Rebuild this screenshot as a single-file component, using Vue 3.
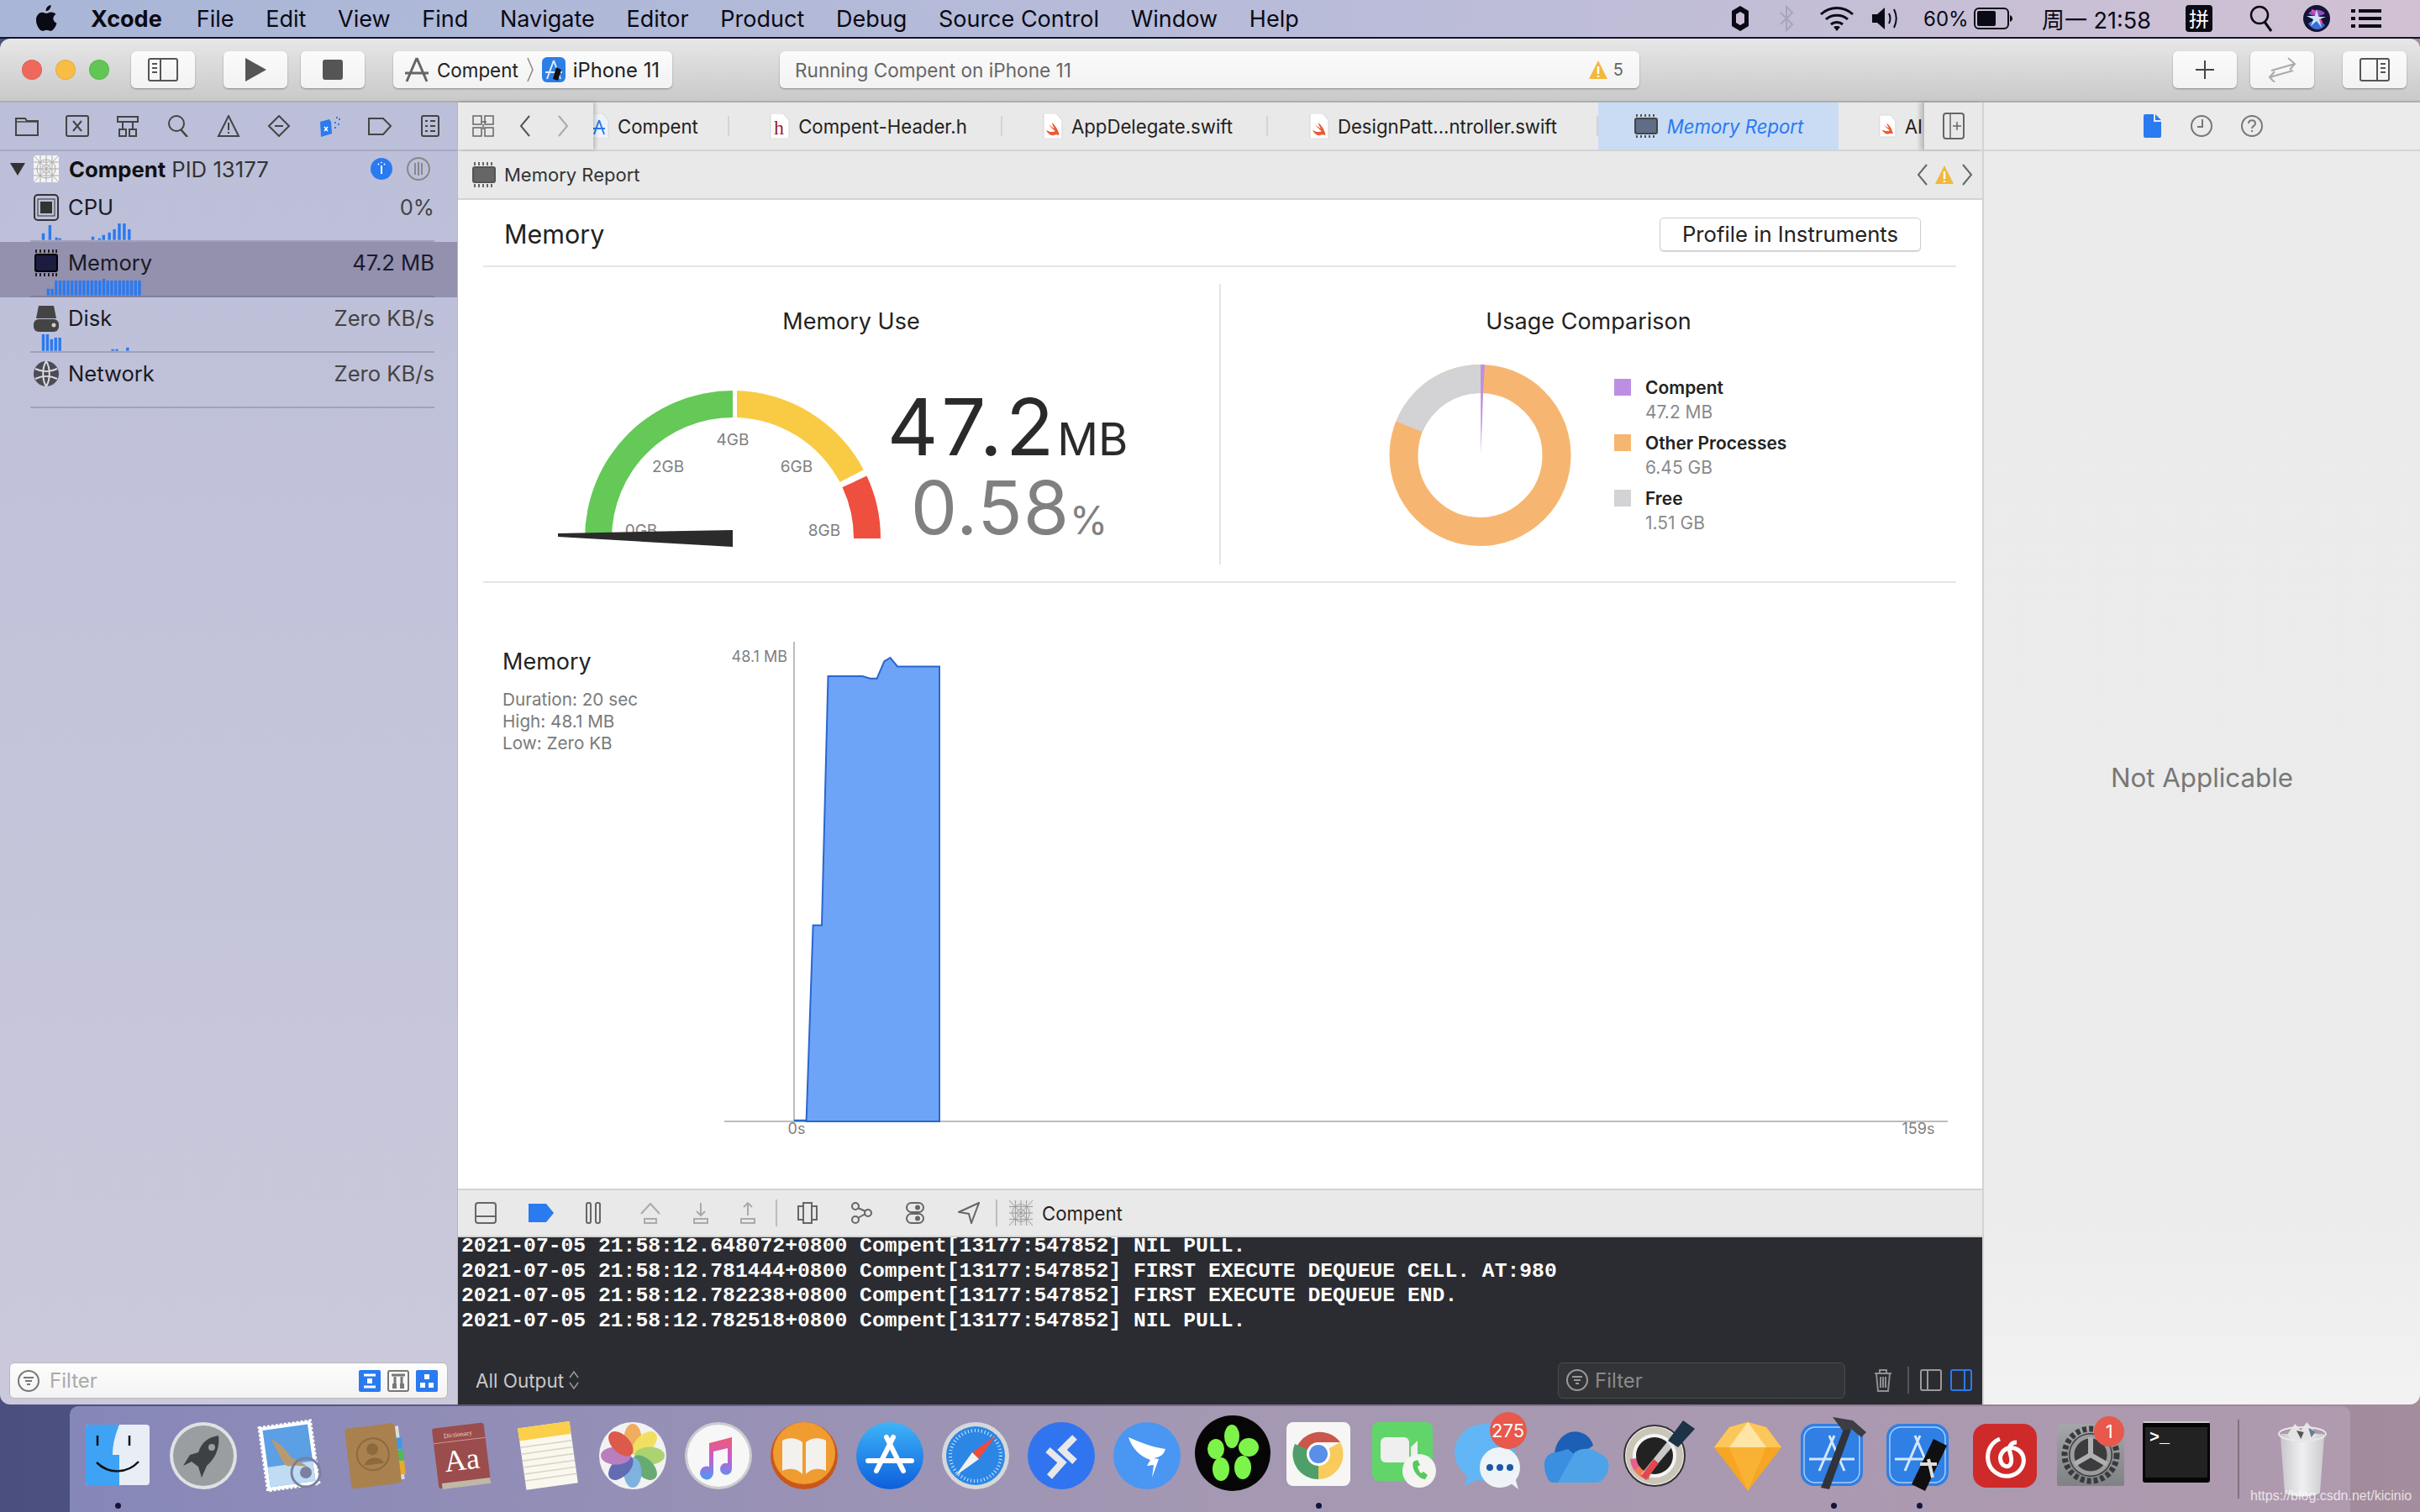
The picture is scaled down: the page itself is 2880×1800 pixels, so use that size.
<template>
  <div class="screen">
    <header class="menubar">
      <svg class="apple" viewBox="0 0 26 32"><path d="M18.6 0c.2 2-.6 3.6-1.6 4.9-1.1 1.300-2.700 2.300-4.400 2.100-.2-1.800.7-3.600 1.700-4.800C15.400 1 17.200.1 18.600 0zM24.500 11c-2.700 1.700-3.100 3.800-3.100 5.100 0 3.400 2.800 5 4.100 5.600-.8 2.500-3.700 9-7.200 9.100-1.700 0-2.500-1.100-4.800-1.100s-3.200 1.100-4.800 1.100C5.500 30.900 1 24.300 1 17.900c0-5.900 3.800-9.200 7.300-9.200 2.100 0 3.700 1.300 5 1.300 1.200 0 3.100-1.400 5.500-1.400 1.100 0 3.800.2 5.700 2.400z" fill="#0a0a14"/></svg>
      <span v-for="m in menus" :key="m" class="menu" :class="{ app: m === 'Xcode' }">{{ m }}</span>
      <div class="status">
        <svg class="st-hex" viewBox="0 0 24 32"><path d="M12 1l10 6v18l-10 6-10-6V7z" fill="#0a0a14"/><path d="M12 8l5 3v10l-5 3-5-3V11z" fill="#cbbfd5"/></svg>
        <svg class="st-bt" viewBox="0 0 18 32"><path d="M2 9l14 14-7 7V2l7 7L2 23" fill="none" stroke="#a9a4ba" stroke-width="2"/></svg>
        <svg class="st-wifi" viewBox="0 0 42 30"><g fill="none" stroke="#0a0a14" stroke-width="3"><path d="M2 10c11-10 27-10 38 0"/><path d="M8 16c7-6.500 19-6.500 26 0"/><path d="M14 22c4-3.500 10-3.500 14 0"/></g><path d="M21 30l-4-5c2-1.500 6-1.500 8 0z" fill="#0a0a14"/></svg>
        <svg class="st-snd" viewBox="0 0 34 30"><path d="M1 10h6l9-8v26l-9-8H1z" fill="#0a0a14"/><g fill="none" stroke="#0a0a14" stroke-width="2"><path d="M21 9c2 4 2 8 0 12"/><path d="M27 4c3.500 7 3.500 15 0 22"/></g></svg>
        <span class="st-pct">60%</span>
        <svg class="st-bat" viewBox="0 0 46 26"><rect x="1" y="1" width="40" height="24" rx="5" fill="none" stroke="#0a0a14" stroke-width="2"/><rect x="4" y="4" width="22" height="18" rx="2" fill="#0a0a14"/><path d="M43 9c2 1 3 2 3 4s-1 3-3 4z" fill="#0a0a14"/></svg>
        <span class="st-time">周一 21:58</span>
        <span class="st-pin">拼</span>
        <svg class="st-search" viewBox="0 0 28 32"><circle cx="12" cy="12" r="10" fill="none" stroke="#0a0a14" stroke-width="2.500"/><path d="M18 20l8 11" stroke="#0a0a14" stroke-width="3"/></svg>
        <svg class="st-siri" viewBox="0 0 32 32"><circle cx="16" cy="16" r="16" fill="#141235"/><path d="M6 22c5-5 15-4 20 2-5 7-15 7-20-2z" fill="#3b6dd6"/><path d="M6 10c5-5 15-6 20 0-5 4-15 4-20 0z" fill="#8a4fc4"/><path d="M10 6c6 3 9 8 12 16" stroke="#e14fa7" stroke-width="3" fill="none"/><path d="M16 5l2 9 9 0-8 3 3 10-6-8-7 6 3-8-8-4 10 0z" fill="#c9e4f7"/></svg>
        <svg class="st-list" viewBox="0 0 36 22"><g fill="#0a0a14"><rect width="5" height="4"/><rect x="9" width="27" height="4"/><rect y="9" width="5" height="4"/><rect x="9" y="9" width="27" height="4"/><rect y="18" width="5" height="4"/><rect x="9" y="18" width="27" height="4"/></g></svg>
      </div>
    </header>

    <div class="window">
      <div class="toolbar">
        <span class="light red"></span><span class="light yellow"></span><span class="light green"></span>
        <button class="tb-btn tb-nav">
          <svg width="36" height="28" viewBox="0 0 36 28"><rect x="1" y="1" width="34" height="26" rx="2" fill="none" stroke="#555" stroke-width="2"/><path d="M15 1v26M5 7h6M5 12h6M5 17h6" stroke="#555" stroke-width="2"/></svg>
        </button>
        <button class="tb-btn tb-play"><svg width="26" height="28" viewBox="0 0 26 28"><path d="M1 0l25 14L1 28z" fill="#555"/></svg></button>
        <button class="tb-btn tb-stop"><span class="stop-square"></span></button>
        <div class="tb-btn scheme">
          <svg width="32" height="30" viewBox="0 0 32 30"><g stroke="#666" stroke-width="3" fill="none"><path d="M16 1L4 29M16 1l12 28M2 19h28"/></g></svg>
          <span class="scheme-name">Compent</span>
          <svg width="8" height="30" viewBox="0 0 8 30"><path d="M1 1l6 14-6 14" fill="none" stroke="#888" stroke-width="1.500"/></svg>
          <svg class="scheme-app" width="28" height="30" viewBox="0 0 28 30"><rect width="28" height="30" rx="6" fill="#2c7fe6"/><path d="M14 4L6 26M14 4l8 22M4 18h20" stroke="#dcecff" stroke-width="2" fill="none"/><path d="M17 12l6 3-4 13-6-2z" fill="#111"/></svg>
          <span class="scheme-device">iPhone 11</span>
        </div>
        <div class="tb-btn activity">
          <span class="activity-text">Running Compent on iPhone 11</span>
          <svg width="24" height="24" viewBox="0 0 24 24"><path d="M12 1l11 22H1z" fill="#f0b93a"/><path d="M12 8v9M12 19v2" stroke="#fff" stroke-width="2.500"/></svg>
          <span class="activity-count">5</span>
        </div>
        <button class="tb-btn tb-add"><svg width="24" height="24" viewBox="0 0 24 24"><path d="M12 1v22M1 12h22" stroke="#444" stroke-width="2"/></svg></button>
        <button class="tb-btn tb-swap"><svg width="38" height="30" viewBox="0 0 38 30"><path d="M6 16L34 8M26 1l8 7-6 7M32 16L4 24M10 17l-6 7 6 6" fill="none" stroke="#aaa" stroke-width="2"/></svg></button>
        <button class="tb-btn tb-insp">
          <svg width="36" height="28" viewBox="0 0 36 28"><rect x="1" y="1" width="34" height="26" rx="2" fill="none" stroke="#555" stroke-width="2"/><path d="M21 1v26M25 7h6M25 12h6M25 17h6" stroke="#555" stroke-width="2"/></svg>
        </button>
      </div>

      <div class="body">
        <aside class="sidebar">
          <div class="nav-tabs">
            <svg class="nav-ic" viewBox="0 0 30 26"><path d="M2 4h11l2 3h13v17H2z" fill="none" stroke="#444" stroke-width="2"/><path d="M2 8h26" stroke="#444" stroke-width="1.500"/></svg>
            <svg class="nav-ic" viewBox="0 0 30 26"><rect x="2" y="1" width="26" height="24" rx="2" fill="none" stroke="#444" stroke-width="2"/><path d="M10 7l10 12M20 7L10 19" stroke="#444" stroke-width="2"/></svg>
            <svg class="nav-ic" viewBox="0 0 30 26"><path d="M3 2h24v6H3zM9 8v8M21 8v8" fill="none" stroke="#444" stroke-width="2"/><rect x="5" y="17" width="8" height="8" fill="none" stroke="#444" stroke-width="2"/><rect x="17" y="17" width="8" height="8" fill="none" stroke="#444" stroke-width="2"/></svg>
            <svg class="nav-ic" viewBox="0 0 30 26"><circle cx="13" cy="10" r="9" fill="none" stroke="#444" stroke-width="2"/><path d="M18 17l8 9" stroke="#444" stroke-width="2.500"/></svg>
            <svg class="nav-ic" viewBox="0 0 30 26"><path d="M15 1l12 24H3z" fill="none" stroke="#444" stroke-width="2"/><path d="M15 9v9M15 20v2" stroke="#444" stroke-width="2"/></svg>
            <svg class="nav-ic" viewBox="0 0 30 26"><path d="M15 1l12 12-12 12L3 13z" fill="none" stroke="#444" stroke-width="2"/><path d="M10 13h10" stroke="#444" stroke-width="2"/></svg>
            <svg class="nav-ic" viewBox="0 0 30 26"><path d="M4 8l11-3 2 3 1 14-13 4z" fill="#2a7af0"/><path d="M9 14l4 5M13 14l-4 5" stroke="#fff" stroke-width="1.500"/><g fill="#2a7af0"><rect x="21" y="8" width="2" height="2"/><rect x="26" y="4" width="2" height="2"/><rect x="23" y="2" width="2" height="2"/><rect x="25" y="10" width="2" height="2"/><rect x="21" y="14" width="2" height="2"/></g></svg>
            <svg class="nav-ic" viewBox="0 0 30 26"><path d="M2 4h17l9 9-9 10H2z" fill="none" stroke="#444" stroke-width="2"/></svg>
            <svg class="nav-ic" viewBox="0 0 30 26"><rect x="5" y="1" width="20" height="24" rx="2" fill="none" stroke="#444" stroke-width="2"/><path d="M9 7h3M15 7h6M9 13h3M15 13h6M9 19h3M15 19h6" stroke="#444" stroke-width="2"/></svg>
          </div>

          <div class="process">
            <span class="disclosure"></span>
            <svg width="30" height="32" viewBox="0 0 30 32"><rect width="30" height="32" fill="#f4f4f6"/><g fill="none" stroke="#aaa"><circle cx="15" cy="16" r="11"/><circle cx="15" cy="16" r="5"/><path d="M0 0l30 32M30 0L0 32M15 0v32M0 16h30M8 0v32M22 0v32M0 8h30M0 24h30"/></g></svg>
            <span class="process-name"><b>Compent</b> PID 13177</span>
            <svg class="proc-info" width="28" height="28" viewBox="0 0 28 28"><circle cx="14" cy="14" r="13" fill="#2a7af0"/><path d="M14 10v10M10 8l1 1M18 8l-1 1M14 6v1" stroke="#fff" stroke-width="2"/></svg>
            <svg class="proc-pause" width="28" height="28" viewBox="0 0 28 28"><circle cx="14" cy="14" r="13" fill="none" stroke="#888" stroke-width="2"/><path d="M10 7v14M14 6v16M18 7v14" stroke="#888" stroke-width="2"/></svg>
          </div>

          <div v-for="g in gauges" :key="g.name" class="gauge-row" :class="{ selected: g.selected }">
            <div class="gauge-inner">
              <div class="gauge-line">
                <svg v-if="g.name === 'CPU'" width="30" height="32" viewBox="0 0 30 32"><rect x="1" y="1" width="28" height="30" rx="4" fill="none" stroke="#333" stroke-width="2"/><rect x="5" y="6" width="20" height="20" fill="none" stroke="#333"/><rect x="8" y="9" width="14" height="14" fill="#333"/></svg>
                <svg v-else-if="g.name === 'Memory'" width="30" height="32" viewBox="0 0 30 32"><rect x="2" y="6" width="26" height="20" rx="2" fill="#1c1c40" stroke="#000" stroke-width="2"/><path d="M3 0v4M8 0v4M13 0v4M18 0v4M23 0v4M27 0v4M3 28v4M8 28v4M13 28v4M18 28v4M23 28v4M27 28v4" stroke="#222" stroke-width="2"/></svg>
                <svg v-else-if="g.name === 'Disk'" width="30" height="32" viewBox="0 0 30 32"><path d="M6 1h18l3 15H3z" fill="#444"/><rect y="17" width="30" height="15" rx="6" fill="#444"/><circle cx="24" cy="24" r="2.500" fill="#ccc"/></svg>
                <svg v-else width="30" height="32" viewBox="0 0 30 32"><circle cx="15" cy="16" r="15" fill="#4c4c58"/><path d="M15 1c-5 8-5 22 0 30M15 1c5 8 5 22 0 30M2 10c8 4 18 4 26 0M2 22c8-4 18-4 26 0" fill="none" stroke="#ddd" stroke-width="2"/></svg>
                <span class="gauge-name">{{ g.name }}</span>
                <span class="gauge-value">{{ g.value }}</span>
              </div>
              <svg class="gauge-bars" width="480" height="20" viewBox="0 0 480 20">
                <rect v-for="(b, i) in g.bars" :key="i" :x="b[0]" :y="20 - b[1]" width="3.500" :height="b[1]" fill="#2a7af0" />
              </svg>
            </div>
          </div>

          <div class="nav-filter">
            <div class="filter-box">
              <svg width="26" height="26" viewBox="0 0 26 26"><circle cx="13" cy="13" r="12" fill="none" stroke="#777" stroke-width="2"/><path d="M7 9h12M9 13h8M11 17h4" stroke="#777" stroke-width="2"/></svg>
              <span class="filter-text">Filter</span>
              <svg class="fb-ic" width="26" height="26" viewBox="0 0 26 26"><rect width="26" height="26" rx="2" fill="#2a7af0"/><path d="M6 6h14M6 20h14" stroke="#fff" stroke-width="3"/><rect x="10" y="10" width="6" height="6" fill="#fff"/></svg>
              <svg class="fb-ic" width="26" height="26" viewBox="0 0 26 26"><rect x="1" y="1" width="24" height="24" rx="2" fill="none" stroke="#777" stroke-width="2"/><path d="M5 6h16M9 8v8M17 8v8" stroke="#777" stroke-width="3"/><rect x="6" y="16" width="5" height="6" fill="#777"/><rect x="15" y="16" width="5" height="6" fill="#777"/></svg>
              <svg class="fb-ic" width="26" height="26" viewBox="0 0 26 26"><rect width="26" height="26" rx="2" fill="#2a7af0"/><rect x="10" y="5" width="6" height="6" fill="#fff"/><rect x="5" y="15" width="6" height="6" fill="#fff"/><rect x="15" y="15" width="6" height="6" fill="#fff"/></svg>
            </div>
          </div>
        </aside>

        <main class="center">
          <div class="tabbar">
            <div class="tab-controls">
              <svg width="26" height="26" viewBox="0 0 26 26"><g fill="none" stroke="#666" stroke-width="1.500"><rect x="1" y="1" width="10" height="10"/><rect x="15" y="1" width="10" height="10"/><rect x="1" y="15" width="10" height="10"/><rect x="15" y="15" width="10" height="10"/><path d="M11 8h6M13 11v6"/></g></svg>
              <svg class="chev-left" width="14" height="26" viewBox="0 0 14 26"><path d="M12 1L2 13l10 12" fill="none" stroke="#555" stroke-width="2"/></svg>
              <svg class="chev-right" width="14" height="26" viewBox="0 0 14 26"><path d="M2 1l10 12L2 25" fill="none" stroke="#aaa" stroke-width="2"/></svg>
            </div>
            <div class="tabs">
              <div v-for="t in tabs" :key="t.name" class="tab" :class="t.cls">
                <svg v-if="t.kind === 'mem'" width="30" height="28" viewBox="0 0 30 28"><rect x="2" y="5" width="26" height="18" rx="2" fill="#5f6d86" stroke="#444" stroke-width="2"/><path d="M4 0v3M9 0v3M14 0v3M19 0v3M24 0v3M4 25v3M9 25v3M14 25v3M19 25v3M24 25v3" stroke="#555" stroke-width="2"/></svg>
                <svg v-else width="24" height="30" viewBox="0 0 24 30">
                  <path d="M1 0h15l7 8v22H1z" :fill="t.kind === 'proj' ? '#eef3fb' : '#fff'" stroke="#d5d5d5" />
                  <text v-if="t.kind === 'h'" x="5" y="25" class="h-glyph">h</text>
                  <path v-else-if="t.kind === 'swift'" d="M4 20c4 2 8 3 11 1-3-2-7-6-8-8 3 3 5 4 7 5-2-3-3-5-3-7 3 3 6 6 7 10 1 2 2 4 1 5-2-1-4-1-6 0-3 1-7-2-9-6z" fill="#ec5a35" />
                  <path v-else d="M12 8l-6 17M12 8l6 17M5 18h14" stroke="#2a7af0" stroke-width="2" fill="none" />
                </svg>
                <span class="tab-name">{{ t.name }}</span>
              </div>
            </div>
            <div class="tab-add">
              <svg width="26" height="32" viewBox="0 0 26 32"><rect x="1" y="1" width="24" height="30" rx="3" fill="none" stroke="#666" stroke-width="2"/><path d="M9 1v30M17 11v10M12 16h10" stroke="#666" stroke-width="1.500"/></svg>
            </div>
          </div>

          <div class="jumpbar">
            <svg width="30" height="30" viewBox="0 0 30 30"><rect x="2" y="6" width="26" height="18" rx="2" fill="#666" stroke="#555" stroke-width="2"/><path d="M4 0v4M9 0v4M14 0v4M19 0v4M24 0v4M4 26v4M9 26v4M14 26v4M19 26v4M24 26v4" stroke="#666" stroke-width="2"/></svg>
            <span class="jump-text">Memory Report</span>
            <svg class="jump-prev" width="14" height="26" viewBox="0 0 14 26"><path d="M12 1L2 13l10 12" fill="none" stroke="#666" stroke-width="2"/></svg>
            <svg class="jump-warn" width="24" height="24" viewBox="0 0 24 24"><path d="M12 1l11 22H1z" fill="#f0b93a"/><path d="M12 8v9M12 19v2" stroke="#fff" stroke-width="2.500"/></svg>
            <svg class="jump-next" width="14" height="26" viewBox="0 0 14 26"><path d="M2 1l10 12L2 25" fill="none" stroke="#666" stroke-width="2"/></svg>
          </div>

          <section class="report">
            <div class="report-head">
              <h2>Memory</h2>
              <button class="profile">Profile in Instruments</button>
            </div>

            <div class="summary">
              <div class="panel">
                <h3>Memory Use</h3>
                <div class="use-body">
                  <svg class="dial" width="410" height="205" viewBox="650 455 410 205">
                    <path d="M696 641A176 176 0 0 1 872 465V497A144 144 0 0 0 728 641Z" fill="#64c957" />
                    <path d="M877 465.100A176 176 0 0 1 1027.800 559.200L999.500 574.100A144 144 0 0 0 877 497.100Z" fill="#f9cb45" />
                    <path d="M1031.500 566.600A176 176 0 0 1 1048 641H1016A144 144 0 0 0 1002.500 580.100Z" fill="#ee4f3e" />
                    <text v-for="l in dialLabels" :key="l.t" :x="l.x" :y="l.y" class="dial-label">{{ l.t }}</text>
                    <polygon points="664,635 664,639 872,651 872,631" fill="#2b2b2b" />
                  </svg>
                  <div class="readout">
                    <div class="read-main">47.2<small>MB</small></div>
                    <div class="read-sub">0.58<small>%</small></div>
                  </div>
                </div>
              </div>
              <div class="panel-rule"></div>
              <div class="panel">
                <h3>Usage Comparison</h3>
                <div class="compare-body">
                  <svg width="220" height="220" viewBox="1650 432 220 220">
                    <circle cx="1760.500" cy="542" r="91" fill="none" stroke="#f6b671" stroke-width="34" />
                    <path d="M1660.400 501.500A108 108 0 0 1 1761 434V468A74 74 0 0 0 1691.900 514.300Z" fill="#d3d3d5" />
                    <polygon points="1761,434 1766,434 1764,468 1761.500,540" fill="#bd8fe2" />
                  </svg>
                  <ul class="legend">
                    <li v-for="l in legend" :key="l.name">
                      <i class="swatch" :class="l.cls"></i>
                      <div><b>{{ l.name }}</b><span>{{ l.value }}</span></div>
                    </li>
                  </ul>
                </div>
              </div>
            </div>

            <div class="graph">
              <div class="graph-info">
                <h4>Memory</h4>
                <p>Duration: 20 sec</p>
                <p>High: 48.1 MB</p>
                <p>Low: Zero KB</p>
              </div>
              <svg class="graph-plot" width="1480" height="610" viewBox="850 750 1480 610">
                <path d="M945 764V1336M862 1335H2318" stroke="#bdbdbd" stroke-width="2" fill="none" />
                <polygon points="959.600,1335 967.600,1101.600 978,1101.600 985.500,805 1026.500,805 1035.400,807.800 1043.500,807.800 1052.400,787.300 1059.500,783 1068,793.500 1118,793.500 1118,1335" fill="#6ea4f7" stroke="#2a66cf" stroke-width="2" />
                <path d="M945 1334H960" stroke="#2a66cf" stroke-width="2.500" />
                <text x="937" y="788" text-anchor="end" class="axis-label">48.1 MB</text>
                <text x="948" y="1350" text-anchor="middle" class="axis-label">0s</text>
                <text x="2283" y="1350" text-anchor="middle" class="axis-label">159s</text>
              </svg>
            </div>
          </section>

          <div class="debugbar">
            <svg width="26" height="26" viewBox="0 0 26 26"><rect x="1" y="1" width="24" height="24" rx="3" fill="none" stroke="#666" stroke-width="2"/><path d="M1 17h24" stroke="#666" stroke-width="2"/></svg>
            <svg width="30" height="26" viewBox="0 0 30 26"><path d="M0 2h21l9 11-9 11H0z" fill="#2a7af0"/></svg>
            <svg width="18" height="26" viewBox="0 0 18 26"><rect x="1" y="1" width="5" height="24" rx="2" fill="none" stroke="#666" stroke-width="2"/><rect x="12" y="1" width="5" height="24" rx="2" fill="none" stroke="#666" stroke-width="2"/></svg>
            <svg width="26" height="26" viewBox="0 0 26 26"><path d="M2 14L13 2l11 12M6 20h14v5H6z" fill="none" stroke="#aaa" stroke-width="2"/></svg>
            <svg width="18" height="26" viewBox="0 0 18 26"><path d="M9 1v14M4 11l5 5 5-5M1 20h16v5H1z" fill="none" stroke="#aaa" stroke-width="2"/></svg>
            <svg width="18" height="26" viewBox="0 0 18 26"><path d="M9 16V1M4 6l5-5 5 5M1 20h16v5H1z" fill="none" stroke="#aaa" stroke-width="2"/></svg>
            <span class="db-sep"></span>
            <svg width="26" height="26" viewBox="0 0 26 26"><path d="M8 1h10v24H8zM8 5H2v16h6M18 5h6v16h-6" fill="none" stroke="#666" stroke-width="2"/></svg>
            <svg width="26" height="26" viewBox="0 0 26 26"><g fill="none" stroke="#666" stroke-width="2"><circle cx="6" cy="5" r="4"/><circle cx="6" cy="21" r="4"/><circle cx="21" cy="13" r="4"/><path d="M9 7l9 4M9 19l9-5"/></g></svg>
            <svg width="26" height="26" viewBox="0 0 26 26"><g fill="none" stroke="#666" stroke-width="2"><rect x="3" y="1" width="20" height="11" rx="5.500"/><rect x="3" y="14" width="20" height="11" rx="5.500"/></g><circle cx="16" cy="6.500" r="3" fill="#666"/><circle cx="16" cy="19.500" r="3" fill="#666"/></svg>
            <svg width="26" height="26" viewBox="0 0 26 26"><path d="M25 1L1 12l12 2 3 11z" fill="none" stroke="#666" stroke-width="2"/></svg>
            <span class="db-sep db-sep-2"></span>
            <svg class="db-proc" width="30" height="30" viewBox="0 0 30 32"><rect width="30" height="32" rx="3" fill="#e4e4e4"/><g fill="none" stroke="#999"><circle cx="15" cy="16" r="11"/><circle cx="15" cy="16" r="5"/><path d="M0 0l30 32M30 0L0 32M15 0v32M0 16h30M8 0v32M22 0v32M0 8h30M0 24h30"/></g></svg>
            <span class="db-name">Compent</span>
          </div>

          <div class="console">
            <div class="log">
              <div v-for="l in logs" :key="l">{{ l }}</div>
            </div>
            <div class="console-foot">
              <span class="output">All Output</span>
              <svg width="12" height="24" viewBox="0 0 12 24"><path d="M1 9l5-7 5 7M1 15l5 7 5-7" fill="none" stroke="#9a9a9a" stroke-width="1.500"/></svg>
              <div class="dark-filter">
                <svg width="26" height="26" viewBox="0 0 26 26"><circle cx="13" cy="13" r="12" fill="none" stroke="#9a9a9a" stroke-width="2"/><path d="M7 9h12M9 13h8M11 17h4" stroke="#9a9a9a" stroke-width="2"/></svg>
                <span>Filter</span>
              </div>
              <svg class="trash" width="22" height="28" viewBox="0 0 22 28"><path d="M1 6h20M7 6V2h8v4M3 6l2 21h12l2-21M8 10v13M11 10v13M14 10v13" fill="none" stroke="#8f8f8f" stroke-width="2"/></svg>
              <span class="foot-sep"></span>
              <svg width="26" height="26" viewBox="0 0 26 26"><rect x="1" y="1" width="24" height="24" rx="2" fill="none" stroke="#9a9a9a" stroke-width="2"/><path d="M9 1v24" stroke="#9a9a9a" stroke-width="2"/></svg>
              <svg class="pane-r" width="26" height="26" viewBox="0 0 26 26"><rect x="1" y="1" width="24" height="24" rx="2" fill="none" stroke="#2a7af0" stroke-width="2"/><path d="M17 1v24" stroke="#2a7af0" stroke-width="2"/></svg>
            </div>
          </div>
        </main>

        <aside class="inspector">
          <div class="insp-tabs">
            <svg width="22" height="28" viewBox="0 0 22 28"><path d="M2 0h10v9h9v17a2 2 0 0 1-2 2H2a2 2 0 0 1-2-2V2a2 2 0 0 1 2-2zM14 0l7 7h-7z" fill="#2a7af0"/></svg>
            <svg width="26" height="26" viewBox="0 0 26 26"><circle cx="13" cy="13" r="12" fill="none" stroke="#777" stroke-width="2"/><path d="M14 5v9H8" fill="none" stroke="#777" stroke-width="2"/></svg>
            <svg width="26" height="26" viewBox="0 0 26 26"><circle cx="13" cy="13" r="12" fill="none" stroke="#777" stroke-width="2"/><path d="M9 10c0-5 8-5 8 0 0 3-4 3-4 6M13 18v2" fill="none" stroke="#777" stroke-width="2"/></svg>
          </div>
          <div class="insp-body">Not Applicable</div>
        </aside>
      </div>
    </div>

    <footer class="dock">
      <div class="dock-item">
        <svg width="80" height="80" viewBox="0 0 80 80"><rect x="2" y="3" width="76" height="72" rx="4" fill="#e8eef5"/><path d="M6 3h36c-4 10-8 22-8 36h8v36H6a4 4 0 0 1-4-4V7a4 4 0 0 1 4-4z" fill="#3ea3f4"/><path d="M16 16v12M54 16v12" stroke="#111" stroke-width="2.500"/><path d="M15 48c14 14 36 14 50-1" fill="none" stroke="#111" stroke-width="2.500"/></svg>
        <i class="dot"></i>
      </div>
      <div class="dock-item">
        <svg width="80" height="80" viewBox="0 0 80 80"><circle cx="40" cy="40" r="40" fill="#dfe2e3"/><circle cx="40" cy="40" r="36" fill="#9a9ea0"/><path d="M58 16c2 14-4 28-14 36l-6 14-4-13-8-6-10 5 8-13 10-3c4-12 12-18 24-20z" fill="#3e4144"/><circle cx="50" cy="30" r="4" fill="#9a9ea0"/></svg>
      </div>
      <div class="dock-item">
        <svg width="80" height="80" viewBox="0 0 80 80"><g transform="rotate(-8 40 40)"><rect x="9" y="2" width="62" height="76" fill="#fff" stroke="#fff" stroke-width="3" stroke-dasharray="3 2"/><rect x="13" y="6" width="54" height="68" fill="#5b9fe4"/><path d="M13 50h54v24H13z" fill="#bfdcf4"/><path d="M22 18c8 4 14 12 20 24 6 4 12 8 18 14-8-2-14-4-18-4-6 2-10-2-12-10-2-8-6-16-8-24z" fill="#b99a70"/></g><circle cx="60" cy="60" r="17" fill="none" stroke="#7b7fa0" stroke-width="3"/><circle cx="60" cy="60" r="7" fill="#7b7fa0"/></svg>
      </div>
      <div class="dock-item">
        <svg width="80" height="80" viewBox="0 0 80 80"><g transform="rotate(-7 40 40)"><rect x="64" y="8" width="8" height="64" fill="#ddd"/><rect x="66" y="22" width="8" height="14" fill="#3a9be6"/><rect x="66" y="36" width="8" height="14" fill="#56b65a"/><rect x="66" y="50" width="8" height="16" fill="#e8a92a"/><rect x="8" y="4" width="60" height="72" rx="4" fill="#a9814e"/><circle cx="38" cy="38" r="19" fill="none" stroke="#8d6a3d" stroke-width="2"/><circle cx="38" cy="32" r="7" fill="#8d6a3d"/><path d="M26 50c4-10 20-10 24 0z" fill="#8d6a3d"/></g></svg>
      </div>
      <div class="dock-item">
        <svg width="80" height="80" viewBox="0 0 80 80"><g transform="rotate(-7 40 40)"><rect x="10" y="4" width="62" height="72" rx="3" fill="#9b4c4c"/><rect x="14" y="70" width="58" height="7" fill="#bfb8a8"/><path d="M10 22h62" stroke="#c99" stroke-width="1"/><text x="40" y="17" class="dict-small">Dictionary</text><text x="41" y="57" class="dict-big">Aa</text></g></svg>
      </div>
      <div class="dock-item">
        <svg width="80" height="80" viewBox="0 0 80 80"><g transform="rotate(-8 40 40)"><rect x="10" y="3" width="62" height="74" fill="#faf8ee"/><rect x="10" y="3" width="62" height="15" fill="#fbcf4a"/><path d="M10 26h62M10 34h62M10 42h62M10 50h62M10 58h62M10 66h62" stroke="#d6d3c5" stroke-width="1.500"/></g></svg>
      </div>
      <div class="dock-item">
        <svg width="80" height="80" viewBox="0 0 80 80"><circle cx="40" cy="40" r="40" fill="#f2f2f2"/><g opacity=".85"><ellipse v-for="p in petals" :key="p.r" cx="40" cy="20" rx="10.500" ry="18" :fill="p.c" :transform="'rotate(' + p.r + ' 40 40)'" /></g></svg>
      </div>
      <div class="dock-item">
        <svg width="80" height="80" viewBox="0 0 80 80"><defs><linearGradient id="noteG" x1="0" y1="0" x2="0" y2="1"><stop offset="0" stop-color="#f25a70"/><stop offset=".5" stop-color="#c35fd0"/><stop offset="1" stop-color="#4a9bf2"/></linearGradient></defs><circle cx="40" cy="40" r="40" fill="#c9cdd0"/><circle cx="40" cy="40" r="37" fill="#f7f7f8"/><path d="M29 25l27-7v37a7 7 0 1 1-5-6V31l-17 4v25a8 8 0 1 1-5-7z" fill="url(#noteG)"/></svg>
      </div>
      <div class="dock-item">
        <svg width="80" height="80" viewBox="0 0 80 80"><circle cx="40" cy="40" r="40" fill="#c9571c"/><circle cx="40" cy="37" r="37" fill="#f09c30"/><path d="M38 24c-6-6-18-6-24-2v36c8-4 18-3 24 4zM42 24c6-6 18-6 24-2v36c-8-4-18-3-24 4z" fill="#f3f1ee"/></svg>
      </div>
      <div class="dock-item">
        <svg width="80" height="80" viewBox="0 0 80 80"><defs><linearGradient id="storeG" x1="0" y1="0" x2="0" y2="1"><stop offset="0" stop-color="#3eb4f8"/><stop offset="1" stop-color="#0d5fdc"/></linearGradient></defs><circle cx="40" cy="40" r="40" fill="url(#storeG)"/><path d="M24 58L44 18M56 58L36 18M14 46h52" stroke="#fff" stroke-width="6" stroke-linecap="round" fill="none"/></svg>
      </div>
      <div class="dock-item">
        <svg width="80" height="80" viewBox="0 0 80 80"><circle cx="40" cy="40" r="40" fill="#d7d8d9"/><circle cx="40" cy="40" r="35" fill="#2c86e6"/><circle cx="40" cy="40" r="30" fill="none" stroke="#d8e9fb" stroke-width="4" stroke-dasharray="1 3"/><path d="M64 16L44 44 36 36z" fill="#ef4a3c"/><path d="M16 64L36 36l8 8z" fill="#f2f2f2"/></svg>
      </div>
      <div class="dock-item">
        <svg width="80" height="80" viewBox="0 0 80 80"><circle cx="40" cy="40" r="40" fill="#3174f0"/><path d="M56 18L41 33l15 14M24 33l17 15-15 17" fill="none" stroke="#e8e8e8" stroke-width="8"/></svg>
      </div>
      <div class="dock-item">
        <svg width="80" height="80" viewBox="0 0 80 80"><circle cx="40" cy="40" r="40" fill="#4a96f3"/><path d="M18 18c14 6 28 12 44 14-2 6-4 8-10 10l-4 1 6 1-8 22 2-15-8 1 4-7c-12-4-22-14-26-27z" fill="#fff"/></svg>
      </div>
      <div class="dock-item">
        <svg class="over" width="90" height="90" viewBox="0 0 90 90"><ellipse cx="45" cy="45" rx="45" ry="45" fill="#060606"/><g fill="#7df44a"><ellipse cx="44" cy="25" rx="9" ry="14"/><ellipse cx="64" cy="38" rx="12" ry="11"/><ellipse cx="25" cy="40" rx="10" ry="12"/><ellipse cx="31" cy="64" rx="10" ry="14"/><ellipse cx="57" cy="62" rx="10" ry="14"/></g></svg>
      </div>
      <div class="dock-item">
        <svg width="80" height="80" viewBox="0 0 80 80"><rect x="2" y="0" width="76" height="76" rx="8" fill="#f6f6f4"/><path d="M40 38L12 38A30 30 0 0 1 66 24H40z" fill="#c9574b"/><path d="M40 38L66 24A30 30 0 0 1 40 68z" fill="#f8cb5c"/><path d="M40 38L40 68A30 30 0 0 1 12 26z" fill="#4f9f6a"/><circle cx="40" cy="38" r="14" fill="#fff"/><circle cx="40" cy="38" r="11" fill="#5a8fe8"/></svg>
        <i class="dot"></i>
      </div>
      <div class="dock-item">
        <svg width="80" height="80" viewBox="0 0 80 80"><rect x="2" y="0" width="72" height="70" rx="8" fill="#62d56a"/><rect x="12" y="18" width="34" height="30" rx="6" fill="#efefef"/><path d="M48 30l8-8v26l-8-6z" fill="#efefef"/><circle cx="58" cy="58" r="20" fill="#f4f4f2"/><path d="M51 47c-3 8 5 20 14 21l3-5-5-4-3 2c-2-2-3-5-4-8l3-2-3-6z" fill="#54c95e"/></svg>
      </div>
      <div class="dock-item">
        <svg class="over" width="90" height="90" viewBox="0 0 90 90"><ellipse cx="38" cy="44" rx="36" ry="34" fill="#62b6f6"/><path d="M18 68l-4 16 16-8z" fill="#62b6f6"/><ellipse cx="56" cy="62" rx="24" ry="24" fill="#eef3f8"/><path d="M68 80l10 8-4-14z" fill="#eef3f8"/><circle cx="44" cy="62" r="4" fill="#1f56a8"/><circle cx="56" cy="62" r="4" fill="#1f56a8"/><circle cx="68" cy="62" r="4" fill="#1f56a8"/></svg>
        <span class="badge badge-275">275</span>
      </div>
      <div class="dock-item">
        <svg width="84" height="80" viewBox="0 0 84 80"><path d="M16 40c0-18 14-32 30-28 8 2 14 8 16 16l-34 22z" fill="#1c5fb5"/><path d="M4 50c0-8 6-14 14-14l14-4 26 22-20 18H14C8 72 4 60 4 50z" fill="#3a8fe0"/><path d="M40 36c8-6 22-6 30 2 8 2 12 10 10 18-2 10-8 16-16 16H20z" fill="#4ea3e8"/></svg>
      </div>
      <div class="dock-item">
        <svg class="over" width="90" height="90" viewBox="0 0 90 90"><circle cx="36" cy="48" r="36" fill="#f4f4f4" stroke="#333" stroke-width="2"/><circle cx="36" cy="48" r="30" fill="none" stroke="#c9c6b8" stroke-width="8"/><path d="M12 66a30 30 0 0 1-5-14l8-1a22 22 0 0 0 4 10z" fill="#e85f8a"/><path d="M12 66l7-5a22 22 0 0 0 12 8l-2 8a30 30 0 0 1-17-11z" fill="#ef7a4f"/><circle cx="36" cy="48" r="22" fill="#222"/><path d="M20 70L54 28l6 6-34 40z" fill="#e5e5e5" opacity=".85"/><path d="M20 72l15-20 6 5-15 20z" fill="#e2464f"/><path d="M52 30L70 6l14 10-20 22z" fill="#1c3246"/></svg>
      </div>
      <div class="dock-item">
        <svg width="80" height="86" viewBox="0 0 80 86"><path d="M18 6L40 0l22 6 18 24-40 52L0 30z" fill="#f6a623"/><path d="M18 6L40 0l22 6 18 24H0z" fill="#fcc75a"/><path d="M40 0l22 30H18z" fill="#fee5a6"/><path d="M18 30h44L40 82z" fill="#f9b233"/></svg>
      </div>
      <div class="dock-item">
        <svg class="over" width="90" height="90" viewBox="0 0 90 90"><rect x="6" y="10" width="74" height="74" rx="16" fill="#2f7fe5"/><rect x="10" y="14" width="66" height="66" rx="13" fill="none" stroke="#a8cdf7" stroke-width="1.500"/><path d="M28 66L46 24M58 66L40 24M16 52h54" stroke="#d3e6fb" stroke-width="3" fill="none"/><path d="M30 86L58 14l8 3-26 71z" fill="#30343a"/><path d="M44 2l24 4 16 14-6 6-12-10-10 2z" fill="#3d3d44"/></svg>
        <i class="dot"></i>
      </div>
      <div class="dock-item">
        <svg class="over" width="90" height="90" viewBox="0 0 90 90"><rect x="6" y="10" width="74" height="74" rx="16" fill="#2f7fe5"/><rect x="10" y="14" width="66" height="66" rx="13" fill="none" stroke="#a8cdf7" stroke-width="1.500"/><path d="M28 66L46 24M58 66L40 24M16 52h54" stroke="#d3e6fb" stroke-width="3" fill="none"/><path d="M62 28l16 8-26 54-16-8z" fill="#101010"/><path d="M56 52l5 22M46 58h20" stroke="#ddd" stroke-width="4"/></svg>
        <i class="dot"></i>
      </div>
      <div class="dock-item">
        <svg width="80" height="80" viewBox="0 0 80 80"><rect x="2" y="2" width="76" height="76" rx="16" fill="#cf2a2a"/><path d="M34 20c-10 4-16 14-14 26 2 12 14 20 26 18 11-2 18-12 16-22-2-8-10-13-18-11-7 2-11 9-9 15 1 5 6 8 10 6 3-2 4-6 1-16-2-8 2-12 8-12" fill="none" stroke="#fff" stroke-width="5"/></svg>
      </div>
      <div class="dock-item">
        <svg width="80" height="80" viewBox="0 0 80 80"><defs><linearGradient id="prefG" x1="0" y1="0" x2="0" y2="1"><stop offset="0" stop-color="#a4a7aa"/><stop offset="1" stop-color="#7f8285"/></linearGradient></defs><rect x="0" y="2" width="80" height="74" rx="2" fill="url(#prefG)"/><circle cx="40" cy="39" r="31" fill="none" stroke="#3a3a3d" stroke-width="7" stroke-dasharray="5 3"/><circle cx="40" cy="39" r="26" fill="#3c3c3f"/><circle cx="40" cy="39" r="22" fill="none" stroke="#9b9b9b" stroke-width="5"/><path d="M40 39V18M40 39L21 50M40 39l19 11" stroke="#b0b0b0" stroke-width="6"/></svg>
        <span class="badge badge-one">1</span>
      </div>
      <div class="dock-item">
        <svg width="80" height="72" viewBox="0 0 80 72"><rect width="80" height="72" rx="3" fill="#050505"/><rect x="3" y="6" width="74" height="60" fill="#222"/><path d="M1 0h78" stroke="#ccc" stroke-width="2"/><text x="8" y="24" class="term">&gt;_</text></svg>
      </div>
      <span class="dock-sep"></span>
      <div class="dock-item trash-item">
        <svg width="70" height="90" viewBox="0 0 80 90" preserveAspectRatio="none"><defs><linearGradient id="binG" x1="0" y1="0" x2="1" y2="0"><stop offset="0" stop-color="#c8c7cc"/><stop offset=".5" stop-color="#f0f0f2"/><stop offset="1" stop-color="#cbcacd"/></linearGradient></defs><path d="M10 14h60l-6 70c-8 6-40 6-48 0z" fill="url(#binG)"/><path d="M20 14l10-12 8 8 8-10 8 8 6 8-14 8H26z" fill="#e3e3e3"/><path d="M32 10l6 10 4-8z" fill="#555"/><path d="M48 6l4 12 6-6z" fill="#6b7d99"/><ellipse cx="40" cy="14" rx="32" ry="8" fill="none" stroke="#e8e8ea" stroke-width="2"/></svg>
      </div>
      <span class="watermark">https://blog.csdn.net/kicinio</span>
    </footer>
  </div>
</template>

<script setup>
const menus = ['Xcode', 'File', 'Edit', 'View', 'Find', 'Navigate', 'Editor', 'Product', 'Debug', 'Source Control', 'Window', 'Help']

const cpuBars = [[10, 8], [18, 18], [26, 3], [30, 2], [70, 4], [78, 2], [83, 6], [90, 9], [96, 13], [102, 20], [108, 20], [114, 13]]
const memBars = []
for (let i = 0; i < 24; i++) {
  memBars.push([16 + i * 4.8, i < 2 ? 8 : i === 14 ? 20 : 18])
}
const diskBars = [[10, 20], [15, 20], [20, 14], [25, 16], [30, 16], [94, 2], [99, 2], [112, 4]]

const gauges = [
  { name: 'CPU', value: '0%', bars: cpuBars },
  { name: 'Memory', value: '47.2 MB', bars: memBars, selected: true },
  { name: 'Disk', value: 'Zero KB/s', bars: diskBars },
  { name: 'Network', value: 'Zero KB/s', bars: [] },
]

const tabs = [
  { name: 'Compent', kind: 'proj', cls: 'tab-first' },
  { name: 'Compent-Header.h', kind: 'h', cls: 'tab-shift' },
  { name: 'AppDelegate.swift', kind: 'swift', cls: 'tab-shift' },
  { name: 'DesignPatt...ntroller.swift', kind: 'swift' },
  { name: 'Memory Report', kind: 'mem', cls: 'tab-active' },
  { name: 'AI', kind: 'swift', cls: 'tab-cut' },
]

const dialLabels = [
  { t: '4GB', x: 872, y: 530 },
  { t: '2GB', x: 795, y: 562 },
  { t: '6GB', x: 948, y: 562 },
  { t: '0GB', x: 763, y: 638 },
  { t: '8GB', x: 981, y: 638 },
]

const legend = [
  { name: 'Compent', value: '47.2 MB', cls: 'sw-purple' },
  { name: 'Other Processes', value: '6.45 GB', cls: 'sw-orange' },
  { name: 'Free', value: '1.51 GB', cls: 'sw-grey' },
]

const logs = [
  '2021-07-05 21:58:12.648072+0800 Compent[13177:547852] NIL PULL.',
  '2021-07-05 21:58:12.781444+0800 Compent[13177:547852] FIRST EXECUTE DEQUEUE CELL. AT:980',
  '2021-07-05 21:58:12.782238+0800 Compent[13177:547852] FIRST EXECUTE DEQUEUE END.',
  '2021-07-05 21:58:12.782518+0800 Compent[13177:547852] NIL PULL.',
]

const petals = [
  { r: 0, c: '#f0a145' }, { r: 45, c: '#f3dc4a' }, { r: 90, c: '#9fce5c' }, { r: 135, c: '#4f9f5e' },
  { r: 180, c: '#6aa9dc' }, { r: 225, c: '#4a55a8' }, { r: 270, c: '#b16ab5' }, { r: 315, c: '#d8402e' },
]
</script>

<style>
html, body {
  margin: 0;
  background: #4a4f80;
}
</style>

<style scoped>
.screen {
  width: 2880px;
  height: 1800px;
  display: flex;
  flex-direction: column;
  overflow: hidden;
  font-family: Inter, "Noto Sans", sans-serif;
  color: #222;
  background: linear-gradient(90deg, #4a4f80 0%, #7a6d8a 50%, #a48d9c 100%);
}

/* menu bar */
.menubar {
  height: 44px;
  flex: none;
  display: flex;
  align-items: center;
  padding-left: 42px;
  background: linear-gradient(90deg, #a9b6d7 0%, #b9bcd9 55%, #d1c1d3 100%);
  border-bottom: 2px solid #14142c;
  box-sizing: content-box;
  color: #0a0a14;
}
.apple { width: 26px; height: 32px; margin-right: 40px; }
.menu { font-size: 27px; margin-right: 37.7px; white-space: nowrap; }
.menu.app { font-weight: 700; margin-right: 41px; }
.status { margin-left: auto; display: flex; align-items: center; padding-right: 46px; font-size: 27px; }
.st-hex { width: 24px; height: 32px; }
.st-bt { width: 18px; height: 32px; margin-left: 34px; }
.st-wifi { width: 42px; height: 30px; margin-left: 30px; }
.st-snd { width: 34px; height: 30px; margin-left: 20px; }
.st-pct { margin-left: 28px; width: 50px; font-size: 24px; white-space: nowrap; }
.st-bat { width: 46px; height: 26px; margin-left: 10px; }
.st-time { margin-left: 35px; font-family: Inter, "Noto Sans CJK SC", sans-serif; width: 137px; white-space: nowrap; }
.st-pin { margin-left: 34px; width: 32px; height: 32px; background: #0a0a14; color: #fff; border-radius: 4px; font: 24px/32px "Noto Sans CJK SC", sans-serif; text-align: center; }
.st-search { width: 28px; height: 32px; margin-left: 44px; }
.st-siri { width: 32px; height: 32px; margin-left: 36px; }
.st-list { width: 36px; height: 22px; margin-left: 25px; }

/* window */
.window {
  height: 1626px;
  flex: none;
  display: flex;
  flex-direction: column;
  border-radius: 12px;
  overflow: hidden;
}
.toolbar {
  height: 74px;
  flex: none;
  display: flex;
  align-items: center;
  background: linear-gradient(#e7e7e7, #c9c9c9);
  border-bottom: 2px solid #adadad;
}
.light { width: 24px; height: 24px; border-radius: 50%; margin-left: 16px; border: 1px solid rgba(0, 0, 0, .08); box-sizing: border-box; }
.light:first-child { margin-left: 26px; }
.red { background: #f0685c; }
.yellow { background: #f8bd45; }
.green { background: #62c655; }
.tb-btn {
  height: 44px;
  display: flex;
  align-items: center;
  justify-content: center;
  box-sizing: border-box;
  padding: 0;
  background: linear-gradient(#fbfbfb, #f2f2f2);
  border: none;
  border-radius: 6px;
  box-shadow: 0 1px 2px rgba(0, 0, 0, .35);
}
.tb-nav { width: 76px; margin-left: 26px; }
.tb-play { width: 76px; margin-left: 34px; }
.tb-stop { width: 76px; margin-left: 16px; }
.stop-square { width: 24px; height: 24px; border-radius: 3px; background: #555; }
.scheme { width: 332px; margin-left: 34px; padding-left: 12px; justify-content: flex-start; font-size: 22.4px; }
.scheme-name { margin-left: 8px; margin-right: 10px; white-space: nowrap; }
.scheme-app { margin-left: 10px; }
.scheme-device { margin-left: 9px; font-size: 23.8px; white-space: nowrap; }
.activity { width: 1023px; margin-left: 128px; padding: 0 19px 0 18px; justify-content: flex-start; font-size: 22.6px; color: #666; }
.activity-text { flex: 1; white-space: nowrap; }
.activity-count { margin-left: 6px; font-size: 20px; }
.tb-add { width: 76px; margin-left: auto; }
.tb-swap { width: 76px; margin-left: 16px; }
.tb-insp { width: 76px; margin-left: 34px; margin-right: 16px; }

.body { flex: 1; min-height: 0; display: flex; }

/* navigator */
.sidebar {
  width: 545px;
  flex: none;
  display: flex;
  flex-direction: column;
  box-sizing: border-box;
  background: linear-gradient(#bcbfd9, #cbc9db);
  border-right: 1px solid #b5b5c5;
}
.nav-tabs {
  height: 58px;
  flex: none;
  display: flex;
  align-items: center;
  box-sizing: border-box;
  padding-left: 2px;
  border-bottom: 2px solid #a7a9c2;
}
.nav-ic { width: 60px; height: 26px; }
.process {
  height: 42px;
  flex: none;
  display: flex;
  align-items: center;
  padding-left: 12px;
  font-size: 25.7px;
  color: #333;
  white-space: nowrap;
}
.disclosure { width: 0; height: 0; border-left: 9px solid transparent; border-right: 9px solid transparent; border-top: 15px solid #333; margin-right: 10px; }
.process-name { margin-left: 12px; }
.process-name b { color: #111; }
.proc-info { margin-left: auto; }
.proc-pause { margin: 0 32px 0 16px; }
.gauge-row { padding: 0 27px 0 36px; flex: none; }
.gauge-row.selected { background: #9391ae; }
.gauge-inner { border-bottom: 2px solid rgba(90, 90, 120, .3); height: 66px; box-sizing: border-box; display: flex; flex-direction: column; justify-content: space-between; }
.gauge-line { display: flex; align-items: center; padding: 5px 0 0 4px; height: 40px; font-size: 25.6px; }
.gauge-name { margin-left: 11px; color: #1a1a24; }
.gauge-value { margin-left: auto; color: #444; white-space: nowrap; }
.selected .gauge-value { color: #1a1a30; }
.gauge-bars { display: block; }
.nav-filter { margin-top: auto; padding: 0 11px 7px; }
.filter-box {
  height: 43px;
  display: flex;
  align-items: center;
  box-sizing: border-box;
  padding: 0 11px 0 9px;
  background: linear-gradient(#fdfdfd, #f3f3f3);
  border: 1px solid #b8b8b8;
  border-radius: 6px;
}
.filter-text { margin-left: 12px; flex: 1; font-size: 24px; color: #aaa; }
.fb-ic { margin-left: 8px; }

/* center column */
.center { width: 1814px; flex: none; display: flex; flex-direction: column; }
.tabbar {
  height: 58px;
  flex: none;
  display: flex;
  box-sizing: border-box;
  background: #e9e9e9;
  border-bottom: 2px solid #d3d3d3;
}
.tab-controls {
  width: 161px;
  flex: none;
  display: flex;
  align-items: center;
  padding-left: 17px;
  box-sizing: border-box;
  box-shadow: 3px 0 4px rgba(0, 0, 0, .18);
  position: relative;
  z-index: 1;
  background: #e9e9e9;
}
.chev-left { margin-left: 30px; }
.chev-right { margin-left: 31px; }
.tabs {
  width: 1582px;
  flex: none;
  display: grid;
  grid-template-columns: 162px 325px 316px 393px 286px 100px;
  font-size: 22.2px;
  overflow: hidden;
}
.tab {
  display: flex;
  align-items: center;
  justify-content: center;
  gap: 10px;
  white-space: nowrap;
  overflow: hidden;
  position: relative;
  color: #222;
}
.tab::after { content: ""; position: absolute; right: 0; top: 16px; height: 24px; width: 2px; background: #d4d4d4; }
.tab-first { justify-content: flex-start; padding-left: 0; margin-left: -5px; }
.tab-shift { padding-left: 6px; }
.tab-active { background: #c9dcf4; color: #2a7af0; font-style: italic; }
.tab-active::after, .tab-cut::after { display: none; }
.tab-cut { justify-content: flex-start; padding-left: 48px; }
.h-glyph { font: 24px "Liberation Serif", serif; fill: #9c2027; }
.tab-add {
  flex: 1;
  display: flex;
  align-items: center;
  justify-content: center;
  border-left: 2px solid #bdbdbd;
  box-shadow: -4px 0 4px rgba(0, 0, 0, .15);
  position: relative;
  background: #e9e9e9;
}
.jumpbar {
  height: 58px;
  flex: none;
  display: flex;
  align-items: center;
  box-sizing: border-box;
  padding-left: 16px;
  background: #e9e9e9;
  border-bottom: 2px solid #d3d3d3;
  font-size: 22px;
}
.jump-text { margin-left: 9px; color: #333; }
.jump-prev { margin-left: auto; }
.jump-warn { margin-left: 7px; }
.jump-next { margin: 0 11px 0 8px; }

.report { flex: 1; min-height: 0; background: #fff; display: flex; flex-direction: column; }
.report-head {
  height: 80px;
  flex: none;
  display: flex;
  align-items: center;
  justify-content: space-between;
  box-sizing: border-box;
  margin: 0 31px 0 30px;
  padding: 3px 42px 0 25px;
  border-bottom: 2px solid #e5e5e5;
}
.report-head h2 { margin: 0; font-size: 30.5px; font-weight: 400; color: #222; }
.profile {
  width: 311px;
  height: 40px;
  background: #fff;
  border: 1px solid #cdcdcd;
  border-radius: 5px;
  box-shadow: 0 1px 1px rgba(0, 0, 0, .15);
  font-family: inherit;
  font-size: 25.7px;
  color: #222;
  padding: 0;
}
.summary {
  height: 376px;
  flex: none;
  display: grid;
  grid-template-columns: 876px 2px 1fr;
  box-sizing: border-box;
  margin: 0 31px 0 30px;
  border-bottom: 2px solid #e5e5e5;
}
.panel h3 { margin: 0; padding-top: 48px; line-height: 34px; font-size: 27px; font-weight: 400; text-align: center; color: #222; }
.panel-rule { background: #e5e5e5; margin: 20px 0; }
.use-body { display: flex; margin-top: 55px; padding-left: 75px; }
.dial { flex: none; }
.dial-label { font-size: 19px; fill: #808080; text-anchor: middle; }
.readout { margin: 11px 0 0 -8px; width: 294px; text-align: center; white-space: nowrap; }
.read-main { font-size: 94px; line-height: 84px; color: #2a2a2a; font-weight: 400; letter-spacing: 4px; }
.read-main small { font-size: 54px; letter-spacing: 0; }
.read-sub { font-size: 88px; line-height: 78px; color: #808080; letter-spacing: 1px; padding-left: 4px; }
.read-sub small { font-size: 46px; letter-spacing: 0; }
.compare-body { display: flex; margin-top: 32px; padding-left: 198px; }
.compare-body > svg { flex: none; }
.legend { list-style: none; margin: 19px 0 0 50px; padding: 0; }
.legend li { display: flex; height: 66px; }
.swatch { width: 20px; height: 20px; margin-right: 17px; flex: none; }
.sw-purple { background: #bd8fe2; }
.sw-orange { background: #f6b671; }
.sw-grey { background: #d3d3d5; }
.legend b { display: block; font-size: 21px; line-height: 22px; font-weight: 600; color: #222; white-space: nowrap; }
.legend span { display: block; margin-top: 7px; font-size: 21px; line-height: 22px; color: #8a8a8a; white-space: nowrap; }

.graph { flex: 1; display: flex; min-height: 0; padding-top: 56px; }
.graph-info { width: 305px; padding-left: 53px; box-sizing: border-box; flex: none; }
.graph-info h4 { margin: 20px 0 14px; font-size: 27px; line-height: 36px; font-weight: 400; color: #222; }
.graph-info p { margin: 0; font-size: 20.7px; line-height: 26px; color: #7a7a7a; }
.graph-plot { flex: none; }
.axis-label { font-size: 18px; fill: #808080; }

.debugbar {
  height: 58px;
  flex: none;
  display: flex;
  align-items: center;
  box-sizing: border-box;
  padding-left: 20px;
  background: #e9e9e9;
  border-top: 2px solid #d3d3d3;
  border-bottom: 2px solid #d3d3d3;
}
.debugbar svg { flex: none; margin-right: 38px; }
.debugbar svg:nth-child(3) { margin-right: 46px; }
.db-sep { width: 2px; height: 32px; background: #bcbcbc; margin-right: 23px; margin-left: -14px; flex: none; }
.db-sep-2 { margin-left: -19px; margin-right: 13px; }
.debugbar .db-proc { margin-right: 10px; }
.db-name { font-size: 22.2px; color: #222; }

.console {
  height: 199px;
  flex: none;
  display: flex;
  flex-direction: column;
  background: #2b2c31;
}
.log {
  flex: 1;
  min-height: 0;
  overflow: hidden;
  padding-left: 4px;
  font: 700 24.7px/29.7px "Liberation Mono", monospace;
  color: #fff;
  white-space: pre;
}
.log div:first-child { margin-top: -4px; }
.console-foot {
  height: 50px;
  flex: none;
  display: flex;
  align-items: center;
  padding: 0 12px 0 21px;
  margin-bottom: 4px;
  font-size: 22.5px;
  color: #c8c8c8;
}
.output { margin-right: 6px; white-space: nowrap; }
.dark-filter {
  width: 342px;
  height: 43px;
  margin-left: auto;
  display: flex;
  align-items: center;
  gap: 8px;
  padding-left: 9px;
  box-sizing: border-box;
  background: #333438;
  border: 1px solid #4b4c50;
  border-radius: 6px;
  color: #8a8a8a;
  font-size: 24px;
}
.trash { margin-left: 34px; }
.foot-sep { width: 2px; height: 32px; margin: 0 13px 0 18px; background: #55565b; }
.pane-r { margin-left: 10px; }

/* inspector */
.inspector {
  flex: 1;
  min-width: 0;
  display: flex;
  flex-direction: column;
  background: linear-gradient(#ebebeb, #ececec 85%, #f2f2f2);
  border-left: 2px solid #d3d3d3;
}
.insp-tabs {
  height: 58px;
  flex: none;
  display: flex;
  align-items: center;
  box-sizing: border-box;
  gap: 34px;
  padding-left: 190px;
  border-bottom: 2px solid #d3d3d3;
}
.insp-body { padding-top: 727px; text-align: center; font-size: 31.3px; color: #777; }

/* dock */
.dock {
  position: relative;
  height: 126px;
  margin: 2px 83px 0 83px;
  display: flex;
  align-items: flex-start;
  padding-left: 6px;
  box-sizing: border-box;
  border-radius: 10px 10px 0 0;
  background: linear-gradient(90deg, #8687b9, #a498b3 50%, #af9aae);
}
.dock-item {
  width: 102.1px;
  height: 126px;
  flex: none;
  position: relative;
  display: flex;
  justify-content: center;
  padding-top: 19px;
  box-sizing: border-box;
}
.dock-item svg { overflow: visible; }
.dock-item svg.over { margin-top: -8px; }
.dot { position: absolute; left: 48px; top: 115px; width: 7px; height: 7px; border-radius: 50%; background: #14143a; }
.badge { position: absolute; display: flex; align-items: center; justify-content: center; border-radius: 50%; color: #fff; background: #e8584b; font-size: 22px; }
.badge-275 { width: 44px; height: 44px; left: 50px; top: 7px; }
.badge-one { width: 36px; height: 36px; left: 55px; top: 12px; }
.dock-sep { width: 2px; height: 94px; margin: 16px 24px 0 22px; background: #85707f; flex: none; }
.watermark { position: absolute; left: 2595px; top: 98px; font: 16px "Liberation Sans", sans-serif; color: rgba(255, 255, 255, .75); white-space: nowrap; }
.dict-small { font: 8px "Liberation Serif", serif; fill: #ecd7c8; text-anchor: middle; }
.dict-big { font: 36px "Liberation Serif", serif; fill: #fff; text-anchor: middle; }
.term { font: 700 20px "Liberation Mono", monospace; fill: #fff; }
</style>
